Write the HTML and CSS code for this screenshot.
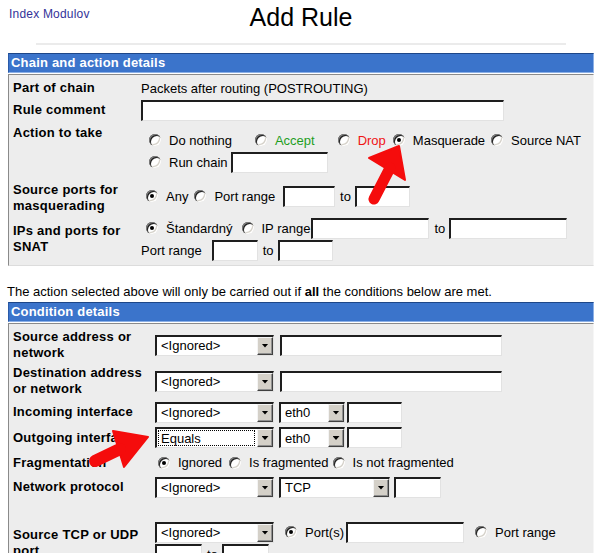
FILE: index.html
```html
<!DOCTYPE html>
<html lang="sk">
<head>
<meta charset="utf-8">
<title>Add Rule</title>
<link rel="stylesheet" href="styles.css">
</head>
<body>
<header class="top">
  <a class="index-link" href="#">Index Modulov</a>
  <h1 class="title">Add Rule</h1>
</header>
<hr class="sep">

<section class="panel p1">
  <div class="panel-head">Chain and action details</div>
  <div class="panel-body chain-grid">
    <div class="lbl">Part of chain</div>
    <div class="val">Packets after routing (POSTROUTING)</div>

    <div class="lbl">Rule comment</div>
    <div class="val"><input class="tx w-comment" type="text"></div>

    <div class="lbl lbl-top">Action to take</div>
    <div class="val val-lines pad8">
      <div class="line">
        <label class="opt ml8"><span class="rd"></span>Do nothing</label>
        <label class="opt ml23"><span class="rd"></span><span class="green">Accept</span></label>
        <label class="opt ml23"><span class="rd"></span><span class="red">Drop</span></label>
        <label class="opt ml7"><span class="rd on"></span>Masquerade</label>
        <label class="opt ml6"><span class="rd"></span>Source NAT</label>
      </div>
      <div class="line">
        <label class="opt ml8"><span class="rd"></span>Run chain</label>
        <input class="tx w-chain ml3" type="text">
      </div>
    </div>

    <div class="lbl lbl-low"><span>Source ports for<br>masquerading</span></div>
    <div class="val">
      <label class="opt ml5"><span class="rd on"></span>Any</label>
      <label class="opt ml6"><span class="rd"></span>Port range</label>
      <input class="tx w-port1 ml8" type="text">
      <span class="to">to</span>
      <input class="tx w-port2" type="text">
    </div>

    <div class="lbl"><span>IPs and ports for<br>SNAT</span></div>
    <div class="val val-lines">
      <div class="line">
        <label class="opt ml5"><span class="rd on"></span>Štandardný</label>
        <label class="opt ml9"><span class="rd"></span>IP range</label>
        <input class="tx w-ip ml1" type="text">
        <span class="to">to</span>
        <input class="tx w-ip" type="text">
      </div>
      <div class="line">
        <span>Port range</span>
        <input class="tx w-pr1 ml10" type="text">
        <span class="to">to</span>
        <input class="tx w-pr2" type="text">
      </div>
    </div>
  </div>
</section>

<p class="note">The action selected above will only be carried out if <b>all</b> the conditions below are met.</p>

<section class="panel p2">
  <div class="panel-head">Condition details</div>
  <div class="panel-body cond-grid">
    <div class="lbl"><span>Source address or<br>network</span></div>
    <div class="val">
      <div class="sel s-main"><span class="sel-text">&lt;Ignored&gt;</span><span class="sel-btn"></span></div>
      <input class="tx w-addr ml6" type="text">
    </div>

    <div class="lbl"><span>Destination address<br>or network</span></div>
    <div class="val">
      <div class="sel s-main"><span class="sel-text">&lt;Ignored&gt;</span><span class="sel-btn"></span></div>
      <input class="tx w-addr ml6" type="text">
    </div>

    <div class="lbl">Incoming interface</div>
    <div class="val">
      <div class="sel s-main"><span class="sel-text">&lt;Ignored&gt;</span><span class="sel-btn"></span></div>
      <div class="sel s-eth ml5"><span class="sel-text">eth0</span><span class="sel-btn"></span></div>
      <input class="tx w-if ml2" type="text">
    </div>

    <div class="lbl">Outgoing interface</div>
    <div class="val">
      <div class="sel s-main"><span class="sel-text focus">Equals</span><span class="sel-btn"></span></div>
      <div class="sel s-eth ml5"><span class="sel-text">eth0</span><span class="sel-btn"></span></div>
      <input class="tx w-if ml2" type="text">
    </div>

    <div class="lbl">Fragmentation</div>
    <div class="val">
      <label class="opt ml3"><span class="rd on"></span>Ignored</label>
      <label class="opt ml7"><span class="rd"></span>Is fragmented</label>
      <label class="opt ml4"><span class="rd"></span>Is not fragmented</label>
    </div>

    <div class="lbl">Network protocol</div>
    <div class="val">
      <div class="sel s-main"><span class="sel-text">&lt;Ignored&gt;</span><span class="sel-btn"></span></div>
      <div class="sel s-tcp ml5"><span class="sel-text">TCP</span><span class="sel-btn"></span></div>
      <input class="tx w-proto ml4" type="text">
    </div>

    <div class="lbl"></div>
    <div class="val"></div>

    <div class="lbl"><span>Source TCP or UDP<br>port</span></div>
    <div class="val val-lines">
      <div class="line">
        <div class="sel s-main"><span class="sel-text">&lt;Ignored&gt;</span><span class="sel-btn"></span></div>
        <label class="opt ml11"><span class="rd on"></span>Port(s)</label>
        <input class="tx w-ports ml2" type="text">
        <label class="opt ml11"><span class="rd"></span>Port range</label>
      </div>
      <div class="line">
        <input class="tx w-sm" type="text">
        <span class="to">to</span>
        <input class="tx w-sm" type="text">
      </div>
    </div>
  </div>
</section>

<svg class="arrows" width="594" height="553" viewBox="0 0 594 553" aria-hidden="true">
  <g fill="#f50c0c" stroke="#f50c0c" stroke-linejoin="round">
    <polygon points="369,158 399,146 405,180" stroke-width="2"/>
    <line x1="390" y1="168" x2="374" y2="199" stroke-width="11" stroke-linecap="round"/>
    <polygon points="113,431 148,437 124,467" stroke-width="2"/>
    <line x1="120" y1="449" x2="95" y2="461" stroke-width="12" stroke-linecap="round"/>
  </g>
</svg>
</body>
</html>
```

FILE: styles.css
```css
html, body {
  overflow: hidden;
}

body {
  margin: 0;
  padding: 0 0 0 8px;
  font-family: "Liberation Sans", Arial, sans-serif;
  font-size: 13px;
  color: #000;
  background: #fff;
}

.top {
  display: grid;
  grid-template-columns: 1fr auto 1fr;
  align-items: start;
  height: 32px;
  padding-top: 2px;
}

.index-link {
  grid-column: 1;
  justify-self: start;
  margin: 5px 0 0 1px;
  font-size: 12px;
  line-height: 14px;
  letter-spacing: 0.2px;
  color: #333399;
  text-decoration: none;
}

.title {
  grid-column: 2;
  margin: 0;
  font-size: 25px;
  font-weight: normal;
  line-height: 30px;
}

.sep {
  border: 0;
  height: 2px;
  background: #ebebeb;
  width: 530px;
  margin: 9px 0 0 28px;
}

.panel.p1 { margin-top: 8px; }
.panel.p2 { margin-top: 2px; }

.panel-head {
  height: 20px;
  box-sizing: border-box;
  background: #3b74cb;
  color: #fff;
  font-weight: bold;
  letter-spacing: 0.2px;
  line-height: 18px;
  padding-left: 2px;
  border: 1px solid;
  border-color: #1d4688 #8cb0e6 #8cb0e6 #2a5aa8;
}

.panel-body {
  margin-top: 1px;
  background: #ededed;
  border: 1px solid;
  border-color: #8a8a8a #f6f6f6 #dcdcdc #8a8a8a;
  display: grid;
}

.chain-grid {
  grid-template-columns: 132px 1fr;
  grid-template-rows: 22px 22px 54px 42px 44px;
  padding: 2px 0 4px 0;
}

.cond-grid {
  grid-template-columns: 146px 1fr;
  grid-template-rows: 36px 36px 26px 25px 25px 24px 22px 44px;
  padding: 3px 0 0 0;
}

.lbl {
  display: flex;
  align-items: center;
  padding-left: 4px;
  font-weight: bold;
  letter-spacing: 0.25px;
  line-height: 16px;
  white-space: nowrap;
}

.lbl-top {
  align-items: flex-start;
  padding-top: 4px;
}

.lbl-low {
  padding-top: 4px;
}

.val {
  display: flex;
  align-items: center;
  white-space: nowrap;
}

.val-lines {
  flex-direction: column;
  align-items: stretch;
}

.pad8 { padding-top: 8px; }

.line {
  height: 22px;
  display: flex;
  align-items: center;
}

.opt {
  display: inline-flex;
  align-items: center;
  white-space: nowrap;
}

.rd {
  position: relative;
  flex: none;
  width: 12px;
  height: 12px;
  margin-right: 8px;
  border-radius: 50%;
  background: #fff;
  box-shadow:
    inset 1px 1px 0 #808080,
    inset 2px 2px 0 #202020,
    inset -1px -1px 0 #ffffff,
    inset -2px -2px 0 #d4d0c8;
}

.rd.on::after {
  content: "";
  position: absolute;
  left: 4px;
  top: 4px;
  width: 4px;
  height: 4px;
  border-radius: 50%;
  background: #000;
}

.green { color: #1f9e1f; }
.red { color: #f01414; }

.tx {
  -webkit-appearance: none;
  appearance: none;
  flex: none;
  box-sizing: border-box;
  height: 21px;
  margin: 0;
  padding: 0 2px;
  background: #fff;
  border-style: solid;
  border-width: 2px 1px 1px 2px;
  border-color: #1e1e1e #e2e2e2 #e2e2e2 #1e1e1e;
  border-radius: 0;
  font: inherit;
  outline: none;
}

.to {
  margin: 0 4px 0 5px;
}

.sel {
  display: inline-flex;
  align-items: stretch;
  flex: none;
  box-sizing: border-box;
  height: 21px;
  background: #fff;
  border-style: solid;
  border-width: 2px 1px 1px 2px;
  border-color: #1e1e1e #e2e2e2 #e2e2e2 #1e1e1e;
}

.sel-text {
  flex: 1;
  display: flex;
  align-items: center;
  padding-left: 4px;
  overflow: hidden;
  white-space: nowrap;
}

.sel-text.focus {
  margin: 1px 2px 1px 1px;
  padding-left: 3px;
  outline: 1px dotted #000;
  outline-offset: -1px;
}

.sel-btn {
  flex: none;
  width: 16px;
  box-sizing: border-box;
  background: #d4d0c8;
  border: 1px solid;
  border-color: #f4f4f4 #404040 #404040 #f4f4f4;
  box-shadow: inset -1px -1px 0 #909090;
  display: flex;
  align-items: center;
  justify-content: center;
}

.sel-btn::before {
  content: "";
  width: 7px;
  height: 4px;
  background: #000;
  clip-path: polygon(0 0, 100% 0, 50% 100%);
}

.note {
  margin: 18px 0 0 -1px;
  line-height: 16px;
}

.arrows {
  position: absolute;
  left: 0;
  top: 0;
  pointer-events: none;
}

.w-comment { width: 363px; }
.w-chain { width: 97px; }
.w-port1 { width: 52px; }
.w-port2 { width: 55px; }
.w-ip { width: 118px; }
.w-pr1 { width: 46px; }
.w-pr2 { width: 55px; }
.w-addr { width: 222px; }
.w-if { width: 55px; }
.w-proto { width: 47px; }
.w-ports { width: 118px; }
.w-sm { width: 47px; }

.s-main { width: 119px; }
.s-eth { width: 66px; }
.s-tcp { width: 111px; }

.ml1 { margin-left: 1px; }
.ml2 { margin-left: 2px; }
.ml3 { margin-left: 3px; }
.ml4 { margin-left: 4px; }
.ml5 { margin-left: 5px; }
.ml6 { margin-left: 6px; }
.ml7 { margin-left: 7px; }
.ml8 { margin-left: 8px; }
.ml9 { margin-left: 9px; }
.ml10 { margin-left: 10px; }
.ml11 { margin-left: 11px; }
.ml23 { margin-left: 23px; }
```
